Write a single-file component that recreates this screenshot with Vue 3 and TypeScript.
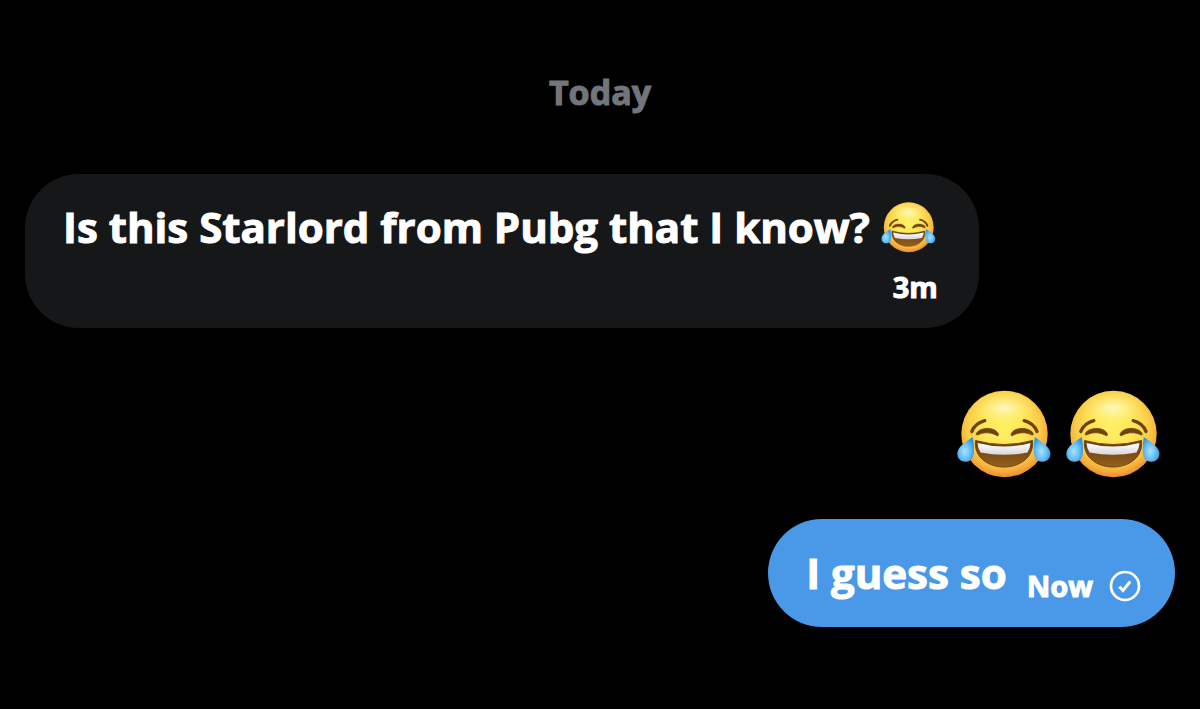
<script setup lang="ts">
interface Message {
  id: number
  side: 'received' | 'sent'
  kind: 'stacked' | 'inline' | 'reaction'
  text?: string
  emojis: number
  time?: string
}

const messages: Message[] = [
  { id: 1, side: 'received', kind: 'stacked', text: 'Is this Starlord from Pubg that I know?', emojis: 1, time: '3m' },
  { id: 2, side: 'sent', kind: 'reaction', emojis: 2 },
  { id: 3, side: 'sent', kind: 'inline', text: 'I guess so', emojis: 0, time: 'Now' },
]
</script>

<template>
  <main class="chat">
    <svg class="sprite" width="0" height="0" aria-hidden="true">
      <defs>
        <radialGradient id="face" cx="49%" cy="42%" r="58%">
          <stop offset="0" stop-color="#fff164" />
          <stop offset="0.45" stop-color="#fde556" />
          <stop offset="0.72" stop-color="#fbce48" />
          <stop offset="0.88" stop-color="#f6ae3c" />
          <stop offset="1" stop-color="#e98d2f" />
        </radialGradient>
        <radialGradient id="shine" cx="50%" cy="50%" r="50%">
          <stop offset="0" stop-color="#fffbd4" stop-opacity="0.85" />
          <stop offset="1" stop-color="#fff27a" stop-opacity="0" />
        </radialGradient>
        <linearGradient id="teeth" x1="0" y1="0" x2="0" y2="1">
          <stop offset="0" stop-color="#ffffff" />
          <stop offset="1" stop-color="#d9d6dc" />
        </linearGradient>
        <linearGradient id="mouth" x1="0" y1="0" x2="0" y2="1">
          <stop offset="0" stop-color="#66390c" />
          <stop offset="1" stop-color="#94611c" />
        </linearGradient>
        <radialGradient id="tear" cx="45%" cy="58%" r="60%">
          <stop offset="0" stop-color="#a9e2ff" />
          <stop offset="0.5" stop-color="#6cc3f7" />
          <stop offset="1" stop-color="#2d94e0" />
        </radialGradient>
        <symbol id="joy" viewBox="0 0 100 97">
          <circle cx="49.5" cy="49" r="43.2" fill="url(#face)" />
          <ellipse cx="49" cy="23" rx="32" ry="17" fill="url(#shine)" />
          <g fill="none" stroke="#70420f" stroke-linecap="round">
            <path d="M16.8 46.5Q20.5 38 29.8 35.7" stroke-width="3.3" />
            <path d="M69.2 35.7Q78.5 38 82 46.5" stroke-width="3.3" />
          </g>
          <path d="M21.5 48.2C24.5 42.2 40 41.2 43.3 48.8C44 51.3 42 51 40.5 49.8C35 47 28 47.2 23.5 49.6C21.7 50.5 20.7 49.8 21.5 48.2Z" fill="#70420f" stroke="#70420f" stroke-width="0.8" />
          <path d="M56.2 48.8C59.5 41.2 75 42.2 78 48.2C78.8 49.8 77.8 50.5 76 49.6C71.5 47.2 64.5 47 59 49.8C57.5 51 55.5 51.3 56.2 48.8Z" fill="#70420f" stroke="#70420f" stroke-width="0.8" />
          <path d="M20.5 55.5Q49 63.5 77.5 55.5C79.5 72 65 82 49 82S18.5 72 20.5 55.5Z" fill="url(#mouth)" stroke="#74460f" stroke-width="1" stroke-linejoin="round" />
          <path d="M22.5 58Q49 65 75.5 58Q75.3 63 72.5 67.5Q49 72 25.5 67.5Q22.7 63 22.5 58Z" fill="url(#teeth)" />
          <path d="M17.8 52C11 56.5 4 61 2.5 67C1.5 73 5.5 76.7 10.5 76.7C16.5 76.7 18.5 72.5 19 67C19.3 61.5 18.5 56 17.8 52Z" fill="url(#tear)" />
          <path d="M79.8 52C86.5 56.5 93.5 61 95.3 67C96.3 73 92.3 76.7 87.3 76.7C81.3 76.7 79.3 72.5 78.8 67C78.5 61.5 79.1 56 79.8 52Z" fill="url(#tear)" />
        </symbol>
      </defs>
    </svg>

    <h1 class="day">Today</h1>

    <ol class="messages">
      <li v-for="m in messages" :key="m.id" :class="['message', m.side, m.kind]">
        <p class="body">
          <span v-if="m.text">{{ m.text }}</span>
          <svg v-for="n in m.emojis" :key="n" class="emoji" role="img" aria-label="😂">
            <use href="#joy" />
          </svg>
        </p>
        <div v-if="m.time" class="meta">
          <time>{{ m.time }}</time>
          <svg v-if="m.side === 'sent'" class="status" viewBox="0 0 32 32" role="img" aria-label="Sent">
            <circle cx="16" cy="16" r="14" fill="none" stroke="#fff" stroke-width="2.7" />
            <path d="M10.3 16.8L14 20.5L21.2 11.5" fill="none" stroke="#fff" stroke-width="2.9" />
          </svg>
        </div>
      </li>
    </ol>
  </main>
</template>

<style>
body {
  margin: 0;
  background: #000;
}
</style>

<style scoped>
.chat {
  box-sizing: border-box;
  min-height: 100vh;
  padding: 68px 25px 24px;
  background: #000;
  color: #fff;
  font-family: "Open Sans", "Noto Sans", sans-serif;
  font-weight: 700;
  -webkit-text-stroke: 1px currentColor;
}

.sprite {
  position: absolute;
}

.day {
  margin: 0 0 58px;
  color: #72767b;
  font-size: 34px;
  line-height: 48px;
  text-align: center;
}

.messages {
  display: flex;
  flex-direction: column;
  margin: 0;
  padding: 0;
  list-style: none;
}

.message {
  display: flex;
  border-radius: 54px;
}

.received {
  align-self: flex-start;
  background: #161718;
}

.sent {
  align-self: flex-end;
}

.body {
  display: flex;
  align-items: center;
  margin: 0;
  font-size: 42px;
  line-height: 56px;
}

.stacked {
  flex-direction: column;
  gap: 14px;
  padding: 25px 41px 23px 38px;
}

.stacked .body {
  gap: 10px;
}

.stacked .emoji {
  width: 58px;
  height: 56px;
}

.reaction {
  margin: 57px 11px 37px 0;
}

.reaction .body {
  gap: 9px;
}

.reaction .emoji {
  width: 100px;
  height: 97px;
}

.inline {
  align-items: center;
  gap: 20px;
  padding: 23px 34px 23px 38px;
  background: #4a99e9;
}

.meta {
  display: flex;
  align-items: center;
  justify-content: flex-end;
  gap: 16px;
  font-size: 29px;
  line-height: 36px;
}

.inline .meta {
  padding-top: 26px;
}

.status {
  width: 32px;
  height: 32px;
}
</style>
